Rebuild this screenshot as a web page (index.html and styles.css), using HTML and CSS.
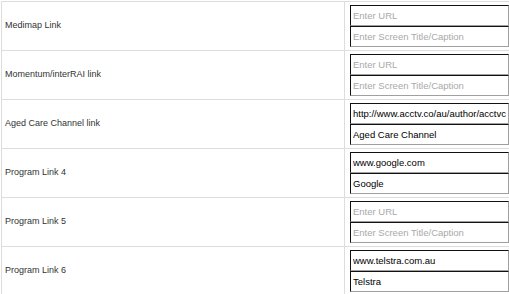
FILE: index.html
```html
<!DOCTYPE html>
<html>
<head>
<meta charset="utf-8">
<link rel="stylesheet" href="styles.css">
</head>
<body>
<div class="form">
  <div class="row">
    <div class="label">Medimap Link</div>
    <div class="fields">
      <input class="field" type="text" placeholder="Enter URL">
      <input class="field" type="text" placeholder="Enter Screen Title/Caption">
    </div>
  </div>
  <div class="row">
    <div class="label">Momentum/interRAI link</div>
    <div class="fields">
      <input class="field" type="text" placeholder="Enter URL">
      <input class="field" type="text" placeholder="Enter Screen Title/Caption">
    </div>
  </div>
  <div class="row">
    <div class="label">Aged Care Channel link</div>
    <div class="fields">
      <input class="field" type="text" placeholder="Enter URL" value="http://www.acctv.co/au/author/acctvchannel">
      <input class="field" type="text" placeholder="Enter Screen Title/Caption" value="Aged Care Channel">
    </div>
  </div>
  <div class="row">
    <div class="label">Program Link 4</div>
    <div class="fields">
      <input class="field" type="text" placeholder="Enter URL" value="www.google.com">
      <input class="field" type="text" placeholder="Enter Screen Title/Caption" value="Google">
    </div>
  </div>
  <div class="row">
    <div class="label">Program Link 5</div>
    <div class="fields">
      <input class="field" type="text" placeholder="Enter URL">
      <input class="field" type="text" placeholder="Enter Screen Title/Caption">
    </div>
  </div>
  <div class="row">
    <div class="label">Program Link 6</div>
    <div class="fields">
      <input class="field" type="text" placeholder="Enter URL" value="www.telstra.com.au">
      <input class="field" type="text" placeholder="Enter Screen Title/Caption" value="Telstra">
    </div>
  </div>
</div>
</body>
</html>
```
FILE: styles.css
```css
html, body {
  margin: 0;
  padding: 0;
  background: #fff;
  overflow: hidden;
}
body {
  font-family: "Liberation Sans", Arial, sans-serif;
  font-size: 9px;
  color: #333;
}
.form {
  box-sizing: border-box;
  margin: 1px 0 0 1px;
  width: 508px;
  border-top: 1px solid #ddd;
  border-left: 1px solid #ddd;
}
.row {
  display: flex;
  border-bottom: 1px solid #ddd;
}
.label {
  box-sizing: border-box;
  width: 343px;
  flex: none;
  padding: 0 0 3px 3px;
  display: flex;
  align-items: center;
  border-right: 1px solid #ddd;
}
.fields {
  display: flex;
  flex-direction: column;
  padding: 3px 0 3px 5px;
}
.field {
  box-sizing: border-box;
  width: 159px;
  height: 21px;
  margin: 0;
  padding: 0 2px;
  font-family: "Liberation Sans", Arial, sans-serif;
  font-size: 9.5px;
  color: #000;
  background: #fff;
  border-style: solid;
  border-width: 1px;
  border-color: #111 #a0a0a0 #a0a0a0 #111;
  outline: none;
}
.field::placeholder {
  color: #a9a9a9;
}
```
